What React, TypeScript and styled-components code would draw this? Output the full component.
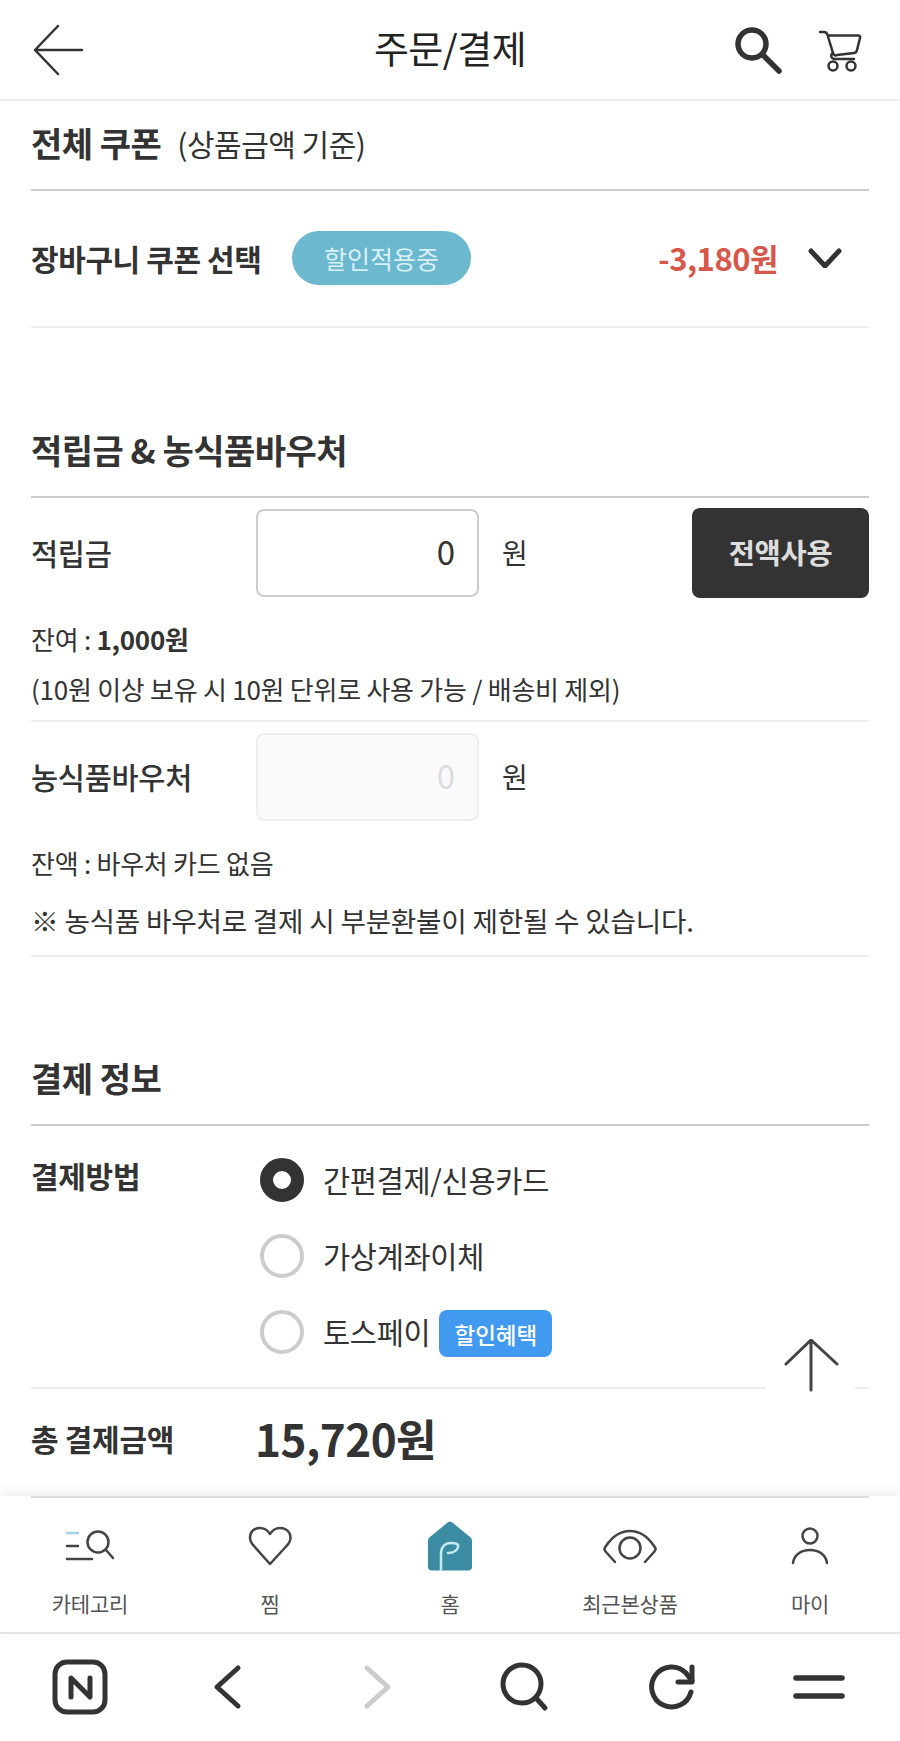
import React from "react";
import styled, { createGlobalStyle } from "styled-components";

const Global = createGlobalStyle`
  html, body { margin: 0; padding: 0; background: #fff; }
  * { box-sizing: border-box; }
  body { font-family: "Noto Sans CJK KR", "Noto Sans", sans-serif; color: #333; }
`;

const Page = styled.div`
  position: relative;
  width: 900px;
  height: 1741px;
  overflow: hidden;
  background: #fff;
  display: flex;
  flex-direction: column;
`;

const Header = styled.header`
  height: 101px;
  flex: none;
  border-bottom: 2px solid #eee;
  display: grid;
  grid-template-columns: 1fr auto 1fr;
  align-items: center;
  padding: 0 38px 0 31px;
`;
const HeaderTitle = styled.h1`
  margin: 0 0 6px 7px;
  font-size: 38px;
  line-height: 50px;
  font-weight: 400;
  color: #222;
  letter-spacing: -0.5px;
`;
const HeaderRight = styled.div`
  display: flex;
  justify-content: flex-end;
  align-items: center;
  gap: 34px;
`;
const Icon = styled.svg`
  display: block;
  flex: none;
  fill: none;
  stroke-linecap: round;
  stroke-linejoin: round;
`;

const Main = styled.main`
  flex: none;
  padding: 0 31px;
`;
const SectionHead = styled.div<{ $top: number; $height: number; $pad?: number }>`
  margin-top: ${(p) => p.$top}px;
  height: ${(p) => p.$height + 2}px;
  padding-bottom: ${(p) => p.$pad ?? 0}px;
  display: flex;
  align-items: center;
  gap: 16px;
  border-bottom: 2px solid #ccc;
`;
const SectionTitle = styled.h2`
  margin: 0;
  font-size: 34px;
  line-height: 44px;
  font-weight: 700;
  color: #333;
  letter-spacing: -0.5px;
`;
const SectionNote = styled.span`
  font-size: 30px;
  font-weight: 400;
  color: #333;
  letter-spacing: -0.5px;
`;

const CouponRow = styled.div`
  height: 137px;
  border-bottom: 2px solid #eee;
  display: flex;
  align-items: center;
  padding-bottom: 2px;
`;
const CouponLabel = styled.span`
  font-size: 30px;
  font-weight: 700;
  color: #333;
  letter-spacing: -0.4px;
  width: 261px;
  flex: none;
`;
const Pill = styled.span`
  width: 179px;
  height: 54px;
  border-radius: 27px;
  background: #6bb8cf;
  color: #d8f0f6;
  font-size: 25px;
  display: flex;
  align-items: center;
  justify-content: center;
`;
const Discount = styled.span`
  margin-left: auto;
  font-size: 31px;
  font-weight: 700;
  color: #d6574b;
  letter-spacing: -0.5px;
`;
const Chevron = styled(Icon)`
  margin: 0 27px 0 30px;
`;

const AmountRow = styled.div`
  display: flex;
  align-items: center;
  height: 99px;
  padding-top: 11px;
`;
const FieldLabel = styled.span`
  width: 225px;
  flex: none;
  padding-bottom: 3px;
  font-size: 29.5px;
  font-weight: 500;
  color: #333;
  letter-spacing: -0.3px;
`;
const AmountInput = styled.input<{ $disabled?: boolean }>`
  width: 223px;
  height: 88px;
  flex: none;
  border: 2px solid ${(p) => (p.$disabled ? "#eee" : "#ccc")};
  border-radius: 8px;
  background: ${(p) => (p.$disabled ? "#fafafa" : "#fff")};
  color: ${(p) => (p.$disabled ? "#ddd" : "#333")};
  font-family: inherit;
  font-size: 33px;
  text-align: right;
  padding: 0 22px 4px 0;
  outline: none;
`;
const Won = styled.span`
  margin-left: 23px;
  padding-bottom: 3px;
  font-size: 28px;
  color: #333;
`;
const UseAll = styled.button`
  margin-left: auto;
  width: 177px;
  height: 90px;
  border: none;
  border-radius: 8px;
  background: #333;
  color: #ddd;
  font-family: inherit;
  font-size: 28.5px;
  font-weight: 700;
  letter-spacing: -0.3px;
  padding: 0 0 4px;
`;
const Hints = styled.div<{ $gap: number; $bottom: number }>`
  margin-top: 18px;
  padding-bottom: ${(p) => p.$bottom}px;
  display: flex;
  flex-direction: column;
  gap: ${(p) => p.$gap}px;
  border-bottom: 2px solid #eee;
`;
const Hint = styled.p<{ $large?: boolean }>`
  margin: 0;
  height: 50px;
  line-height: 47px;
  font-size: ${(p) => (p.$large ? 27.7 : 26)}px;
  color: #333;
  letter-spacing: -0.25px;
  white-space: nowrap;
  b { font-weight: 700; }
`;

const Payment = styled.div`
  display: flex;
  height: 263px;
  border-bottom: 2px solid #eee;
`;
const PayLabel = styled.span`
  width: 229px;
  flex: none;
  margin-top: 29px;
  height: 40px;
  line-height: 40px;
  font-size: 30px;
  font-weight: 700;
  color: #333;
  letter-spacing: -0.3px;
`;
const Options = styled.div`
  display: flex;
  flex-direction: column;
  gap: 32px;
  padding-top: 32px;
`;
const Option = styled.div`
  display: flex;
  align-items: center;
  height: 44px;
`;
const Radio = styled.span<{ $on?: boolean }>`
  width: 44px;
  height: 44px;
  flex: none;
  border-radius: 50%;
  border: ${(p) => (p.$on ? "13px solid #333" : "4px solid #ccc")};
  margin-right: 19px;
`;
const OptionText = styled.span`
  padding-bottom: 2px;
  font-size: 29.5px;
  color: #333;
  letter-spacing: -0.3px;
`;
const Badge = styled.span`
  margin: 3px 0 0 9px;
  width: 113px;
  height: 47px;
  border-radius: 8px;
  background: #4299f0;
  color: #fff;
  font-size: 22.5px;
  font-weight: 500;
  display: flex;
  align-items: center;
  justify-content: center;
`;
const TotalRow = styled.div`
  display: flex;
  align-items: center;
  height: 107px;
  padding-bottom: 10px;
`;
const TotalLabel = styled.span`
  width: 224px;
  flex: none;
  font-size: 30px;
  font-weight: 700;
  color: #333;
  letter-spacing: -0.3px;
`;
const TotalValue = styled.span`
  font-size: 44px;
  font-weight: 700;
  color: #333;
  letter-spacing: -0.5px;
`;

const TopButton = styled.div`
  position: absolute;
  left: 766px;
  top: 1336px;
  width: 89px;
  height: 60px;
  background: #fff;
  display: flex;
  justify-content: center;
  align-items: center;
`;

const TabBar = styled.nav`
  flex: none;
  height: 138px;
  background: #fff;
  border-bottom: 2px solid #e5e5e5;
  box-shadow: 0 -4px 10px rgba(0, 0, 0, 0.07);
  display: grid;
  grid-template-columns: repeat(5, 180px);
  position: relative;
`;
const TopRule = styled.div`
  position: absolute;
  left: 31px;
  right: 31px;
  top: 0;
  height: 2px;
  background: #ddd;
`;
const Tab = styled.div`
  display: flex;
  flex-direction: column;
  align-items: center;
`;
const TabIcon = styled.div`
  height: 77px;
  display: flex;
  align-items: flex-end;
  justify-content: center;
`;
const TabText = styled.span`
  margin-top: 15px;
  font-size: 21px;
  line-height: 30px;
  color: #555;
  letter-spacing: -0.2px;
`;

const BrowserBar = styled.div`
  flex: 1;
  display: flex;
  align-items: flex-start;
  padding-top: 25px;
  padding-left: 52px;
`;
const BrowserIcon = styled(Icon)<{ $left: number }>`
  margin-left: ${(p) => p.$left}px;
`;

const tabs = [
  {
    label: "카테고리",
    icon: (
      <Icon width="60" height="54" viewBox="60 1519 60 54" stroke="#444" strokeWidth="2.5">
        <path d="M67 1533h11" stroke="#9fd3e3" />
        <path d="M67 1546h11M67 1559h25M106 1550l7 8" />
        <circle cx="98" cy="1542" r="10.5" />
      </Icon>
    ),
  },
  {
    label: "찜",
    icon: (
      <Icon width="60" height="54" viewBox="240 1519 60 54" stroke="#444" strokeWidth="2.5">
        <path d="M270 1564l-16-18c-3.5-3.5-4-6-4-8.5 0-5.500 4-9.500 10-9.500 4 0 7.500 2 10 6 2.500-4 6-6 10-6 6 0 10.500 4 10.500 9.500 0 2.500-.5 5-4 8.500z" />
      </Icon>
    ),
  },
  {
    label: "홈",
    icon: (
      <Icon width="60" height="54" viewBox="420 1519 60 54">
        <path d="M447 1523c2-2 4-2 6 0l17 14c1.500 1 2 2.500 2 4v26c0 2-1.500 3.500-3.500 3.500h-37c-2 0-3.500-1.500-3.500-3.500v-26c0-1.500.5-3 2-4z" fill="#3b8ca3" />
        <path d="M441 1570v-16c0-7 4-11 10-11 5 0 8 1 7 4-1 4-5 6-10 6" stroke="#c4eaf2" strokeWidth="2.5" />
      </Icon>
    ),
  },
  {
    label: "최근본상품",
    icon: (
      <Icon width="60" height="54" viewBox="600 1519 60 54" stroke="#444" strokeWidth="2.5">
        <path d="M615 1562l-9-10c-2-2-2-4 0-6 6-9 14-15 24-15s18 6 24 15c2 2 2 4 0 6l-9 10" />
        <circle cx="630" cy="1548" r="10.5" />
      </Icon>
    ),
  },
  {
    label: "마이",
    icon: (
      <Icon width="60" height="54" viewBox="780 1519 60 54" stroke="#444" strokeWidth="2.5">
        <circle cx="810" cy="1536" r="7.5" />
        <path d="M793 1563c1-8 8-13 17-13s16 5 17 13" />
      </Icon>
    ),
  },
];

export default function App() {
  return (
    <Page>
      <Global />
      <Header>
        <Icon width="54" height="54" viewBox="31 22 54 54" stroke="#333" strokeWidth="2.5">
          <path d="M58 25L35 49l23 24M35 49h47" />
        </Icon>
        <HeaderTitle>주문/결제</HeaderTitle>
        <HeaderRight>
          <Icon width="50" height="50" viewBox="734 24 50 50" stroke="#333" strokeWidth="5.5">
            <circle cx="752" cy="43" r="14" />
            <path d="M763 54l16 16" />
          </Icon>
          <Icon width="44" height="50" viewBox="818 24 44 50" stroke="#333" strokeWidth="2.5">
            <path d="M820 31h4c2 0 3 1 3.500 3l5.500 18c.5 2 2 3 4 2l17-2c1.500 0 2.500-1 3-3l3-12c.5-2-.5-2.500-2-2.500h-30" />
            <path d="M833 52c-3 2-2 6 2 6h19" />
            <circle cx="833" cy="65" r="4.5" />
            <circle cx="851" cy="65" r="4.5" />
          </Icon>
        </HeaderRight>
      </Header>

      <Main>
        <SectionHead $top={0} $height={88} $pad={4}>
          <SectionTitle>전체 쿠폰</SectionTitle>
          <SectionNote>(상품금액 기준)</SectionNote>
        </SectionHead>
        <CouponRow>
          <CouponLabel>장바구니 쿠폰 선택</CouponLabel>
          <Pill>할인적용중</Pill>
          <Discount>-3,180원</Discount>
          <Chevron width="34" height="20" viewBox="0 0 34 20" stroke="#333" strokeWidth="5">
            <path d="M3 3l14 15L31 3" />
          </Chevron>
        </CouponRow>

        <SectionHead $top={76} $height={92}>
          <SectionTitle>적립금 &amp; 농식품바우처</SectionTitle>
        </SectionHead>
        <AmountRow>
          <FieldLabel>적립금</FieldLabel>
          <AmountInput defaultValue="0" readOnly />
          <Won>원</Won>
          <UseAll>전액사용</UseAll>
        </AmountRow>
        <Hints $gap={0} $bottom={5}>
          <Hint>
            잔여 : <b>1,000원</b>
          </Hint>
          <Hint>(10원 이상 보유 시 10원 단위로 사용 가능 / 배송비 제외)</Hint>
        </Hints>
        <AmountRow>
          <FieldLabel>농식품바우처</FieldLabel>
          <AmountInput $disabled defaultValue="0" readOnly />
          <Won>원</Won>
        </AmountRow>
        <Hints $gap={8} $bottom={8}>
          <Hint>잔액 : 바우처 카드 없음</Hint>
          <Hint $large>※ 농식품 바우처로 결제 시 부분환불이 제한될 수 있습니다.</Hint>
        </Hints>

        <SectionHead $top={75} $height={92}>
          <SectionTitle>결제 정보</SectionTitle>
        </SectionHead>
        <Payment>
          <PayLabel>결제방법</PayLabel>
          <Options>
            <Option>
              <Radio $on />
              <OptionText>간편결제/신용카드</OptionText>
            </Option>
            <Option>
              <Radio />
              <OptionText>가상계좌이체</OptionText>
            </Option>
            <Option>
              <Radio />
              <OptionText>토스페이</OptionText>
              <Badge>할인혜택</Badge>
            </Option>
          </Options>
        </Payment>
        <TotalRow>
          <TotalLabel>총 결제금액</TotalLabel>
          <TotalValue>15,720원</TotalValue>
        </TotalRow>
      </Main>

      <TopButton>
        <Icon width="56" height="54" viewBox="782 1340 56 54" stroke="#444" strokeWidth="3">
          <path d="M785 1365l25-24 26 24M810 1341v50" />
        </Icon>
      </TopButton>

      <TabBar>
        <TopRule />
        {tabs.map((t) => (
          <Tab key={t.label}>
            <TabIcon>{t.icon}</TabIcon>
            <TabText>{t.label}</TabText>
          </Tab>
        ))}
      </TabBar>

      <BrowserBar>
        <BrowserIcon $left={0} width="56" height="56" viewBox="52 1659 56 56" stroke="#333" strokeWidth="5">
          <rect x="55" y="1662" width="50" height="50" rx="12" />
          <path d="M71 1697v-19l19 19v-19" />
        </BrowserIcon>
        <BrowserIcon $left={104} width="30" height="56" viewBox="212 1659 30 56" stroke="#333" strokeWidth="5">
          <path d="M238 1668l-21 19 21 19" />
        </BrowserIcon>
        <BrowserIcon $left={120} width="30" height="56" viewBox="362 1659 30 56" stroke="#ccc" strokeWidth="5">
          <path d="M367 1668l21 19-21 19" />
        </BrowserIcon>
        <BrowserIcon $left={108} width="50" height="56" viewBox="500 1659 50 56" stroke="#333" strokeWidth="5">
          <circle cx="522" cy="1684" r="19" />
          <path d="M536 1698l9 10" />
        </BrowserIcon>
        <BrowserIcon $left={98} width="50" height="56" viewBox="648 1659 50 56" stroke="#333" strokeWidth="5">
          <path d="M691 1692a20 20 0 1 1-5-19l6 8" />
          <path d="M692 1667v15h-14" />
        </BrowserIcon>
        <BrowserIcon $left={95} width="54" height="56" viewBox="793 1659 54 56" stroke="#333" strokeWidth="5.5">
          <path d="M796 1678h46M796 1696h46" />
        </BrowserIcon>
      </BrowserBar>
    </Page>
  );
}
